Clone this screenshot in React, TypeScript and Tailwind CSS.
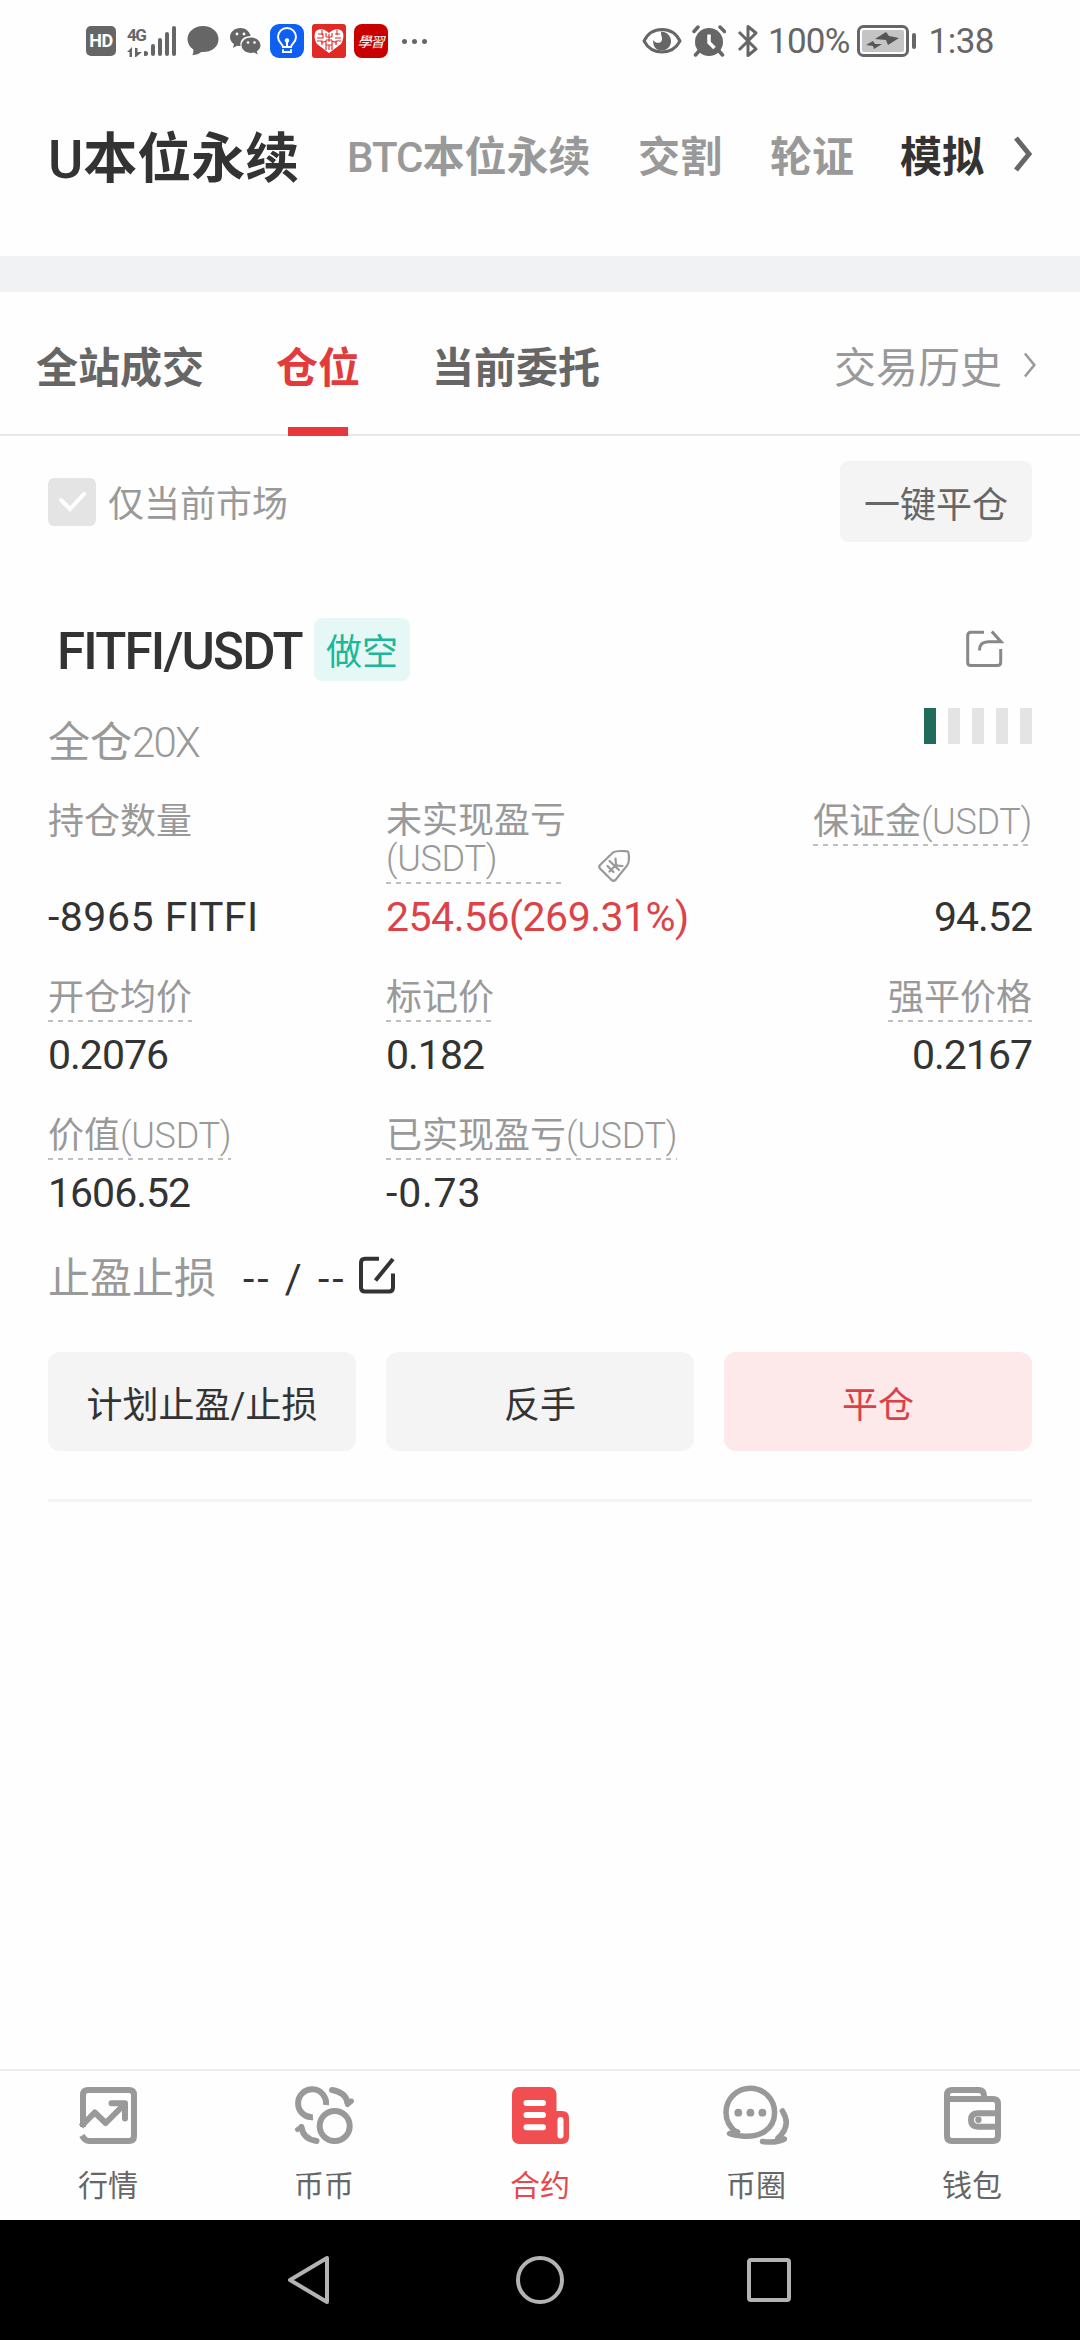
import type { ReactNode } from "react";
import clsx from "clsx";

type Stat = {
  label: string;
  unit?: string;
  value: string;
};

const PRICES: Stat[] = [
  { label: "开仓均价", value: "0.2076" },
  { label: "标记价", value: "0.182" },
  { label: "强平价格", value: "0.2167" },
];

const TOTALS: Stat[] = [
  { label: "价值", unit: "(USDT)", value: "1606.52" },
  { label: "已实现盈亏", unit: "(USDT)", value: "-0.73" },
];

function StatusBar() {
  return (
    <header className="flex h-[82px] items-center justify-between pl-[86px] pr-[86px] text-[#666]">
      <div className="flex items-center">
        <div className="flex size-[30px] items-center justify-center rounded-[5px] bg-[#666] text-[18px] font-bold leading-[26px] tracking-[-0.5px] text-white">
          HD
        </div>
        <div className="ml-[11px] flex h-[34px] w-[50px] items-end">
          <div className="w-[17px]">
            <div className="text-[17px] font-bold leading-5 tracking-[-1.5px]">4G</div>
            <svg className="mt-[1px] h-[12px] w-[16px]" viewBox="0 0 16 12" fill="#666">
              <path d="M0 6 5 1v10H2.500V6zM8 2h2.500v4H15l-6 5H8z" />
            </svg>
          </div>
          <svg className="h-[34px] w-[33px]" viewBox="0 0 33 34" fill="#666">
            <circle cx="1.500" cy="29.500" r="2.500" />
            <rect x="7" y="20" width="4" height="12" rx="2" />
            <rect x="14" y="14" width="4" height="18" rx="2" />
            <rect x="21" y="8" width="4" height="24" rx="2" />
            <rect x="28" y="2" width="4" height="30" rx="2" />
          </svg>
        </div>
        <svg className="ml-[10px] h-[32px] w-[32px]" viewBox="0 0 32 32" fill="#666">
          <path d="M16 1C7.200 1 .5 7 .5 14.200c0 4.300 2.300 7.800 5.800 10.200.4 2.200-.2 4.200-1 5.800 3.700-.2 6.700-1.500 9-3.200 10 .6 17.200-5 17.200-12.800C31.500 7 24.800 1 16 1z" />
        </svg>
        <svg className="ml-[10px] h-[32px] w-[32px]" viewBox="0 0 32 32" fill="#666">
          <path d="M11.500 3C5.500 3 1 7 1 12c0 3 1.500 5.400 4 7l-1 4 4-2.300c1 .3 2.200.4 3.500.3C10.500 15 15 11 21.600 11 20.600 6.300 16.500 3 11.500 3z" />
          <path d="M22 12.500c-5.300 0-9.500 3.400-9.500 7.800S16.700 28 22 28c1.100 0 2.200-.2 3.200-.5l3.500 2-.9-3.200c2.300-1.400 3.700-3.600 3.700-6 0-4.400-4.200-7.800-9.500-7.800z" />
          <g fill="#fff">
            <circle cx="8" cy="9" r="1.400" />
            <circle cx="15" cy="9" r="1.400" />
            <circle cx="19" cy="17.500" r="1.300" />
            <circle cx="25.500" cy="17.500" r="1.300" />
          </g>
        </svg>
        <svg className="ml-[9px] size-[34px]" viewBox="0 0 34 34">
          <rect width="34" height="34" rx="9" fill="#0f5ff5" />
          <g fill="none" stroke="#fff" strokeWidth="2" strokeLinecap="round">
            <path d="M13 23c0-3-5-4.500-5-10a9 9 0 0 1 18 0c0 5.500-5 7-5 10z" />
            <path d="M13 26v2h8v-2M17 17v6" />
          </g>
          <circle cx="17" cy="16.500" r="2.200" fill="#fff" />
        </svg>
        <svg className="ml-2 size-[34px]" viewBox="0 0 34 34">
          <rect width="34" height="34" rx="3" fill="#df2a25" />
          <path
            d="M17 29 5 20C2 15 2 10 4 7c4-3 9-2 13 2 4-4 9-5 13-2 2 3 2 8-1 13z"
            fill="#fff"
          />
          <path
            d="M6 10h5v4H5M14 9v4M20 9v4M23 14h6M23 10h5M5 17h5v4M24 21v-4h5M9 19l5-2v9M20 26v-9l5 2M10 6v5M25 6v5M14 13h6M14 16h6M17 10v8M14 21h6M17 21v5"
            fill="none"
            stroke="#df2a25"
            strokeWidth="1.100"
          />
        </svg>
        <div className="ml-2 flex size-[34px] items-center justify-center rounded-[8px] bg-[#c80000] pr-px font-['Noto_Sans_CJK_TC',sans-serif] text-[14px] italic leading-5 tracking-[-1px] text-white">
          學習
        </div>
        <div className="ml-[14px] flex gap-[5px]">
          <i className="size-[5px] rounded-full bg-[#666]" />
          <i className="size-[5px] rounded-full bg-[#666]" />
          <i className="size-[5px] rounded-full bg-[#666]" />
        </div>
      </div>

      <div className="flex items-center">
        <svg className="h-[28px] w-[40px]" viewBox="0 0 40 28">
          <path
            d="M2 14C6 6 13 2.500 20 2.500S34 6 38 14c-4 7.500-11 11-18 11S6 21.500 2 14z"
            fill="none"
            stroke="#666"
            strokeWidth="3"
            strokeLinejoin="round"
          />
          <path d="M19 4.500c5 0 10 4 10 9.500s-4 9.500-9.500 9.500S11 19.500 11 13c2 3.500 8 4 9 0 .6-3-1.500-5-1-8.500z" fill="#666" />
        </svg>
        <svg className="ml-[10px] size-[34px]" viewBox="0 0 34 34">
          <circle cx="17" cy="18" r="14" fill="#666" />
          <path d="M2 7.500 6 3M28 3l4.500 4.500M7 27l-3.500 4M27 27l3.500 4" stroke="#666" strokeWidth="3.500" strokeLinecap="round" />
          <path d="M17 10.500v8l5.500 5.500" fill="none" stroke="#fff" strokeWidth="3.500" />
        </svg>
        <svg className="ml-[11px] h-[34px] w-[24px]" viewBox="0 0 24 34" fill="none" stroke="#666" strokeWidth="3" strokeLinejoin="round">
          <path d="m2 8 17 17-8 6.500v-29L19 9 2 26" />
        </svg>
        <span className="ml-[7px] pt-px text-[35px] leading-none tracking-[-0.8px]">100%</span>
        <svg className="ml-[7px] h-[34px] w-[60px]" viewBox="0 0 60 34">
          <rect x="1.500" y="2.500" width="49" height="29" rx="5" fill="none" stroke="#666" strokeWidth="3" />
          <rect x="5" y="6" width="42" height="22" rx="2" fill="#c4c4c4" />
          <path d="m18 15 11-7 3 4 10 2-11 7-2-5zM9 21l7-4 2 3h7l-8 5-1-3z" fill="#555" />
          <rect x="55" y="9" width="4" height="16" rx="2" fill="#666" />
        </svg>
        <span className="ml-3 pt-px text-[35px] leading-none tracking-[-0.5px]">1:38</span>
      </div>
    </header>
  );
}

function Chevron({ className }: { className: string }) {
  return (
    <svg className={className} viewBox="0 0 20 36" fill="none" stroke="currentColor">
      <path d="m3 2 13 16L3 34" />
    </svg>
  );
}

function MarketNav() {
  return (
    <nav className="flex h-[174px] items-start pl-12 pt-[44px] text-[42px] font-bold text-[#999]">
      <div className="flex h-16 items-center whitespace-nowrap">
        <span className="w-[299px] pt-[3px] text-[54px] text-[#333]">
          <span className="font-medium">U</span>本位永续
        </span>
        <span className="w-[291px]">
          <span className="font-medium tracking-[-1px]">BTC</span>本位永续
        </span>
        <span className="w-[132px]">交割</span>
        <span className="w-[130px]">轮证</span>
        <span className="text-[#333]">模拟</span>
        <Chevron className="mb-2 ml-[29px] h-[36px] w-[20px] stroke-[5] text-[#666]" />
      </div>
    </nav>
  );
}

function Tabs() {
  return (
    <div className="flex h-[144px] items-stretch border-b-2 border-[#e8e8e8] pl-9 pr-[42px] text-[42px] font-bold text-[#666]">
      <div className="flex items-center pt-3">全站成交</div>
      <div className="relative ml-[72px] flex items-center pt-3 text-[#e33a3c]">
        仓位
        <i className="absolute -bottom-[2px] left-3 h-[9px] w-[60px] bg-[#e8383a]" />
      </div>
      <div className="ml-[72px] flex items-center pt-3">当前委托</div>
      <div className="ml-auto flex items-center gap-5 pt-3 font-normal text-[#999]">
        交易历史
        <Chevron className="mb-2 h-[26px] w-[16px] stroke-[3.500]" />
      </div>
    </div>
  );
}

function FilterRow() {
  return (
    <div className="mt-[25px] flex h-[81px] items-center justify-between px-12 text-[36px]">
      <div className="flex items-center gap-3 text-[#999]">
        <svg className="size-12" viewBox="0 0 48 48">
          <rect width="48" height="48" rx="6" fill="#e4e4e4" />
          <path d="m13 22 9 9 14-15" fill="none" stroke="#fff" strokeWidth="4" strokeLinecap="round" />
        </svg>
        <span className="pt-[7px]">仅当前市场</span>
      </div>
      <button className="h-[81px] w-[192px] rounded-[8px] bg-[#f4f4f4] pt-[9px] text-[#666]">一键平仓</button>
    </div>
  );
}

function Dashes() {
  return (
    <i className="block h-[2px] w-full bg-[repeating-linear-gradient(90deg,#c0c0c0_0_5px,transparent_5px_10px)]" />
  );
}

function Label({ children }: { children: ReactNode }) {
  return (
    <span className="block w-fit text-[36px] text-[#999]">
      <span className="flex h-12 items-center whitespace-nowrap pt-[3px]">{children}</span>
      <Dashes />
    </span>
  );
}

function Unit({ children }: { children: ReactNode }) {
  return <span className="font-light tracking-[-0.3px]">{children}</span>;
}

function Value({ children, className }: { children: ReactNode; className: string }) {
  return <span className={clsx("flex h-12 items-center text-[41px]", className)}>{children}</span>;
}

function StatRow({ items }: { items: Stat[] }) {
  return (
    <div className="grid grid-cols-3 gap-x-[30px]">
      {items.map((item, i) => (
        <div key={item.label} className={clsx("flex flex-col", i === 2 ? "items-end" : "items-start")}>
          <Label>
            {item.label}
            {item.unit && <Unit>{item.unit}</Unit>}
          </Label>
          <Value
            className={clsx(
              "mt-[9px] text-[#333]",
              item.value.startsWith("-") ? "tracking-[0.8px]" : "tracking-[-1px]"
            )}
          >
            {item.value}
          </Value>
        </div>
      ))}
    </div>
  );
}

function PositionCard() {
  return (
    <section className="px-12 pt-[75px]">
      <div className="flex h-[64px] items-center">
        <h2 className="w-[256px] whitespace-nowrap pl-[9px] pt-[5px] text-[51px] font-medium leading-none tracking-[-1.8px] text-[#333]">
          FITFI/USDT
        </h2>
        <span className="ml-[10px] flex h-[63px] w-24 items-center justify-center rounded-[8px] bg-[#e6f8f5] pt-[8px] text-[36px] text-[#1bb89a]">
          做空
        </span>
        <svg className="ml-auto mr-7 size-10" viewBox="0 0 40 40" fill="none" stroke="#888" strokeWidth="3">
          <path d="M20 3.300H7q-3.300 0-3.300 3.300v27q0 3 3.300 3h26q3.700 0 3.700-3V20" />
          <path d="M15.400 21.500q0-8.800 9-8.800H37L27.800 2.500" />
        </svg>
      </div>

      <div className="mt-[27px] flex h-[66px] items-start justify-between">
        <div className="flex h-[66px] items-center pt-[3px] text-[42px] text-[#999]">
          全仓<span className="font-light tracking-[-1.8px]">20X</span>
        </div>
        <div className="flex gap-3">
          <i className="h-9 w-3 bg-[#216b5a]" />
          <i className="h-9 w-3 bg-[#e4e4e4]" />
          <i className="h-9 w-3 bg-[#e4e4e4]" />
          <i className="h-9 w-3 bg-[#e4e4e4]" />
          <i className="h-9 w-3 bg-[#e4e4e4]" />
        </div>
      </div>

      <div className="mt-[22px] grid h-[97px] grid-cols-3 gap-x-[30px] text-[36px] text-[#999]">
        <div className="flex h-12 items-center pt-[3px]">持仓数量</div>
        <div className="flex">
          <div className="w-44">
            <div className="h-[84px] whitespace-nowrap pt-[6px] leading-[38px]">
              未实现盈亏
              <br />
              <Unit>(USDT)</Unit>
            </div>
            <div className="pt-[2px]">
              <Dashes />
            </div>
          </div>
          <svg className="ml-[35px] mt-[52px] size-9" viewBox="0 0 36 36" fill="none" stroke="#999" strokeWidth="2.200" strokeLinecap="round">
            <path d="M3 17 16 4.500Q19 2.500 29 3.200q2.500 0 2.700 2.500 1 8.500-1.700 12L18.500 32q-2 1.500-4 0L3 20.500q-1.500-1.700 0-3.500z" />
            <path d="m12.500 13 9.500 9M18.500 10.500l.5 7 6.500.5M10.500 18l6 6M12.500 23.500l7-7" />
          </svg>
        </div>
        <div className="flex justify-end">
          <Label>
            保证金<Unit>(USDT)</Unit>
          </Label>
        </div>
      </div>
      <div className="grid grid-cols-3 gap-x-[30px]">
        <Value className="tracking-[0.5px] text-[#333]">-8965 FITFI</Value>
        <Value className="tracking-[-0.5px] text-[#dc4348]">254.56(269.31%)</Value>
        <Value className="justify-end tracking-[-1px] text-[#333]">94.52</Value>
      </div>

      <div className="mt-[31px]">
        <StatRow items={PRICES} />
      </div>
      <div className="mt-[31px]">
        <StatRow items={TOTALS} />
      </div>

      <div className="mt-[31px] flex h-[60px] items-center text-[42px] text-[#999]">
        <span className="pt-[2px]">止盈止损</span>
        <span className="ml-[27px] w-[114px] whitespace-nowrap pt-[2px] text-[41px] tracking-[3px] text-[#333]">
          -- / --
        </span>
        <svg className="mb-[7px] size-10" viewBox="0 0 40 40" fill="none" stroke="#333" strokeWidth="4">
          <path d="M22 3.800H8q-4 0-4 4v24.700q0 4 4 4h24q4 0 4-4V18.500" />
          <path d="M18.500 25.500 36 4" />
        </svg>
      </div>

      <div className="mt-[44px] grid grid-cols-3 gap-[30px] text-[36px] text-[#333]">
        <button className="h-[99px] rounded-[12px] bg-[#f4f4f4] pt-[8px]">计划止盈/止损</button>
        <button className="h-[99px] rounded-[12px] bg-[#f4f4f4] pt-[8px]">反手</button>
        <button className="h-[99px] rounded-[12px] bg-[#fde9e9] pt-[8px] text-[#dd4044]">平仓</button>
      </div>
      <div className="mt-12 h-[3px] bg-[#f2f3f4]" />
    </section>
  );
}

function TabItem({ label, active, children }: { label: string; active?: boolean; children: ReactNode }) {
  return (
    <div className={clsx("flex flex-1 flex-col items-center pt-3 text-[30px]", active ? "text-[#e5494d]" : "text-[#666]")}>
      <svg
        className="size-16 overflow-visible"
        viewBox="0 0 64 64"
        fill="none"
        stroke="#999"
        strokeWidth="6"
        strokeLinecap="round"
        strokeLinejoin="round"
      >
        {children}
      </svg>
      <span className="mt-[17px] leading-[44px]">{label}</span>
    </div>
  );
}

function BottomTabs() {
  return (
    <nav className="flex h-[151px] border-t-2 border-[#ececec]">
      <TabItem label="行情">
        <path strokeLinecap="butt" d="M7 44V12q0-5 5-5h41q5 0 5 5v41q0 5-5 5H13q-4 0-7-5.500" />
        <path strokeLinecap="butt" d="m5 43.500 13.700-14L29.700 40l18-18" />
        <path d="M35.500 20.300H49V35.500" />
      </TabItem>
      <TabItem label="币币">
        <path strokeLinecap="butt" d="M34 22A14 14 0 1 0 21 34.300" />
        <circle cx="42.700" cy="43" r="15" />
        <path d="M40 7q14 2.500 15.500 13" />
        <path d="m55 18.500 4.500-.5-4 3.500z" strokeWidth="5" />
        <path d="M24.500 58Q11 56 9.500 44" />
        <path d="m9.500 44-4 2.500 4-2.500z" strokeWidth="5" />
      </TabItem>
      <TabItem label="合约" active>
        <rect x="4" y="4" width="44.500" height="57" rx="7" fill="#f04e50" stroke="none" />
        <path d="M44 28h10q7 0 7 7v19q0 7-7 7H40z" fill="#f04e50" stroke="none" />
        <rect x="49.500" y="34" width="6" height="21.500" rx="3" fill="#fff" stroke="none" />
        <path d="M18.500 20H35M18.500 32H35M18.500 44.300H35" stroke="#fff" />
      </TabItem>
      <TabItem label="币圈">
        <path d="M13 49.500Q2 42 2 29.500a24.300 24.300 0 0 1 48.600 0C50.600 46 36 55 18 53Q10 52.500 5.500 50.500q6 .5 8-1.500" strokeWidth="5.500" />
        <g fill="#999" stroke="none">
          <circle cx="14.300" cy="29.700" r="3.900" />
          <circle cx="26.400" cy="29.700" r="3.900" />
          <circle cx="38.400" cy="29.700" r="3.900" />
        </g>
        <path d="M58.400 28q9.500 15-4.500 27l6.500 1Q52 60.500 38.500 58.500" strokeWidth="5.500" />
      </TabItem>
      <TabItem label="钱包">
        <path d="M7 16v37q0 5 5 5h41q5 0 5-5V21q0-5-5-5zV12q0-5 5-5h26.500q5.500 0 5.500 6v3" />
        <path strokeLinecap="butt" d="M58 30.300H38q-7 0-7 6.700t7 6.700h20" />
        <circle cx="38.400" cy="36.800" r="3.200" fill="#999" stroke="none" />
      </TabItem>
    </nav>
  );
}

function SystemNav() {
  return (
    <div className="flex h-[120px] items-center justify-center gap-[180px] bg-black">
      <svg className="size-[50px]" viewBox="0 0 50 50" fill="none" stroke="#b3b3b3" strokeWidth="4" strokeLinejoin="round">
        <path d="M5 25 42 3v44z" />
      </svg>
      <svg className="size-[50px]" viewBox="0 0 50 50" fill="none" stroke="#b3b3b3" strokeWidth="4">
        <circle cx="25" cy="25" r="22" />
      </svg>
      <svg className="size-[50px]" viewBox="0 0 50 50" fill="none" stroke="#b3b3b3" strokeWidth="4">
        <rect x="4" y="5" width="40" height="40" rx="2" />
      </svg>
    </div>
  );
}

export default function App() {
  return (
    <div className="flex h-[2340px] w-[1080px] flex-col overflow-hidden bg-[#fefefe] font-[Roboto,'Noto_Sans_CJK_SC',sans-serif] leading-none">
      <StatusBar />
      <MarketNav />
      <div className="h-9 shrink-0 bg-[#f1f2f4]" />
      <Tabs />
      <FilterRow />
      <PositionCard />
      <div className="flex-1" />
      <BottomTabs />
      <SystemNav />
    </div>
  );
}
